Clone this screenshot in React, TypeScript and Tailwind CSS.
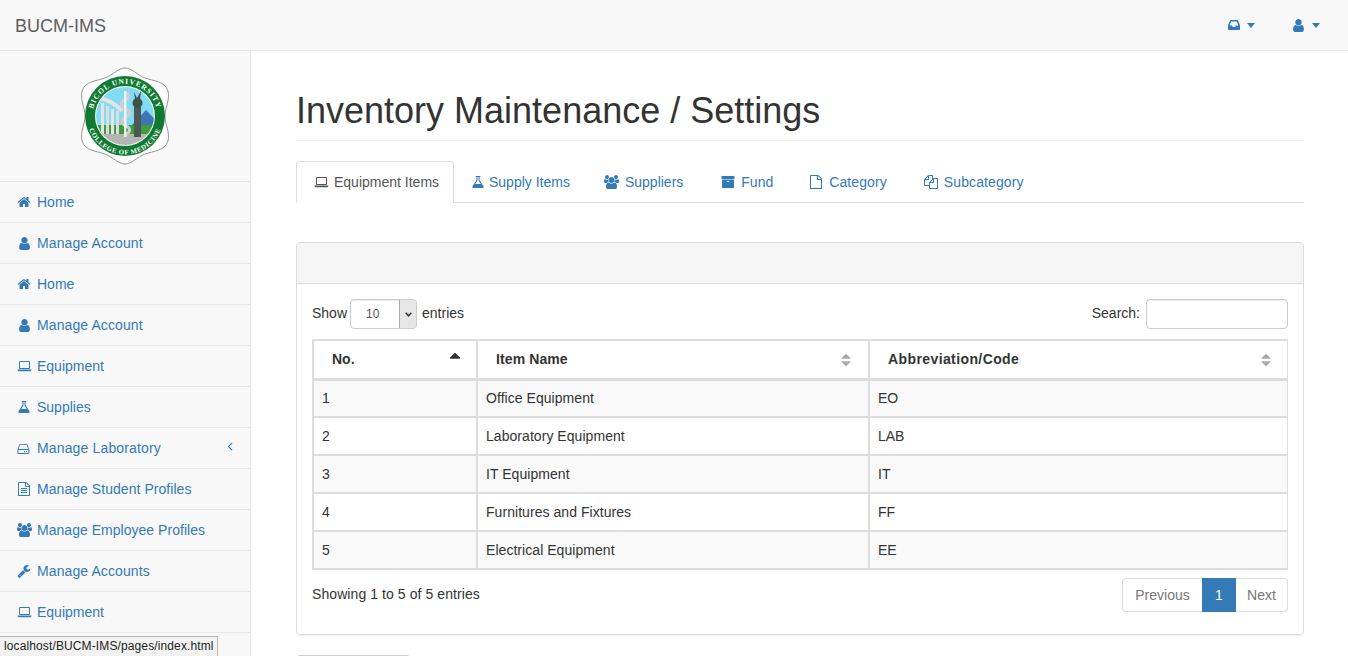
import React from "react";

type IconDef = { d: string; vb?: number };

const I: Record<string, IconDef> = {
  home: { d: "M1472 992v480q0 26-19 45t-45 19h-384v-384h-256v384h-384q-26 0-45-19t-19-45v-480q0-1 .5-3t.5-3l575-474 575 474q1 2 1 6zm223-69l-62 74q-8 9-21 11h-3q-13 0-21-7l-692-577-692 577q-12 8-24 7-13-2-21-11l-62-74q-8-10-7-23.5t11-21.5l719-599q32-26 76-26t76 26l244 204v-195q0-14 9-23t23-9h192q14 0 23 9t9 23v408l219 182q10 8 11 21.5t-7 23.5z" },
  user: { d: "M1536 1399q0 109-62.5 187t-150.5 78h-854q-88 0-150.5-78t-62.5-187q0-85 8.5-160.5t31.5-152 58.5-131 94-89 134.5-34.5q131 128 313 128t313-128q76 0 134.5 34.5t94 89 58.5 131 31.5 152 8.5 160.5zm-256-887q0 159-112.5 271.5t-271.5 112.5-271.5-112.5-112.5-271.5 112.5-271.5 271.5-112.5 271.5 112.5 112.5 271.5z" },
  users: { vb: 1920, d: "M593 896q-162 5-265 128h-134q-82 0-138-40.5t-56-118.5q0-353 124-353 6 0 43.5 21t97.5 42.5 119 21.5q67 0 133-23-5 37-5 66 0 139 81 256zm1071 637q0 120-73 189.5t-194 69.5h-874q-121 0-194-69.5t-73-189.5q0-53 3.5-103.5t14-109 26.5-108.5 43-97.5 62-81 85.5-53.5 111.5-20q10 0 43 21.5t73 48 107 48 135 21.5 135-21.5 107-48 73-48 43-21.5q61 0 111.5 20t85.5 53.5 62 81 43 97.5 26.5 108.5 14 109 3.5 103.5zm-1024-1277q0 106-75 181t-181 75-181-75-75-181 75-181 181-75 181 75 75 181zm704 384q0 159-112.5 271.5t-271.5 112.5-271.5-112.5-112.5-271.5 112.5-271.5 271.5-112.5 271.5 112.5 112.5 271.5zm576 225q0 78-56 118.5t-138 40.5h-134q-103-123-265-128 81-117 81-256 0-29-5-66 66 23 133 23 59 0 119-21.5t97.5-42.5 43.5-21q124 0 124 353zm-128-609q0 106-75 181t-181 75-181-75-75-181 75-181 181-75 181 75 75 181z" },
  laptop: { vb: 1920, d: "M416 1280q-66 0-113-47t-47-113v-704q0-66 47-113t113-47h1088q66 0 113 47t47 113v704q0 66-47 113t-113 47h-1088zm-32-864v704q0 13 9.5 22.5t22.5 9.5h1088q13 0 22.5-9.5t9.5-22.5v-704q0-13-9.5-22.5t-22.5-9.5h-1088q-13 0-22.5 9.5t-9.5 22.5zM80 1344h1760v64q0 66-47 113t-113 47H240q-66 0-113-47t-47-113z" },
  flask: { d: "M1591 1448q56 89 21.5 152.5t-140.5 63.5h-1152q-106 0-140.5-63.5t21.5-152.5l503-793v-399h-64q-26 0-45-19t-19-45 19-45 45-19h512q26 0 45 19t19 45-19 45-45 19h-64v399zm-779-725l-272 429h712l-272-429-20-31v-436h-128v436z" },
  hdd: { d: "M1040 1344q0 33-23.5 56.5t-56.5 23.5-56.5-23.5-23.5-56.5 23.5-56.5 56.5-23.5 56.5 23.5 23.5 56.5zm256 0q0 33-23.5 56.5t-56.5 23.5-56.5-23.5-23.5-56.5 23.5-56.5 56.5-23.5 56.5 23.5 23.5 56.5zm160 160v-320q0-13-9.5-22.5t-22.5-9.5h-1216q-13 0-22.5 9.5t-9.5 22.5v320q0 13 9.5 22.5t22.5 9.5h1216q13 0 22.5-9.5t9.5-22.5zm-1248-480h1202l-170-522q-4-13-15-21t-25-8h-782q-14 0-25 8t-15 21zm1376 160v320q0 66-47 113t-113 47h-1216q-66 0-113-47t-47-113v-320q0-25 16-75l197-606q17-53 63-86t101-33h782q55 0 101 33t63 86l197 606q16 50 16 75z" },
  fileText: { d: "M1596 380q28 28 48 76t20 88v1152q0 40-28 68t-68 28h-1344q-40 0-68-28t-28-68v-1600q0-40 28-68t68-28h896q40 0 88 20t76 48zm-444-244v376h376q-10-29-22-41l-313-313q-12-12-41-22zm384 1528v-1024h-416q-40 0-68-28t-28-68v-416h-768v1536h1280zm-1024-864q0-14 9-23t23-9h704q14 0 23 9t9 23v64q0 14-9 23t-23 9h-704q-14 0-23-9t-9-23v-64zm736 224q14 0 23 9t9 23v64q0 14-9 23t-23 9h-704q-14 0-23-9t-9-23v-64q0-14 9-23t23-9h704zm0 256q14 0 23 9t9 23v64q0 14-9 23t-23 9h-704q-14 0-23-9t-9-23v-64q0-14 9-23t23-9h704z" },
  file: { d: "M1596 380q28 28 48 76t20 88v1152q0 40-28 68t-68 28h-1344q-40 0-68-28t-28-68v-1600q0-40 28-68t68-28h896q40 0 88 20t76 48zm-444-244v376h376q-10-29-22-41l-313-313q-12-12-41-22zm384 1528v-1024h-416q-40 0-68-28t-28-68v-416h-768v1536h1280z" },
  wrench: { d: "M448 1472q0-26-19-45t-45-19-45 19-19 45 19 45 45 19 45-19 19-45zm644-420l-682 682q-37 37-90 37-52 0-91-37l-106-108q-38-36-38-90 0-53 38-91l681-681q39 98 114.5 173.5t173.5 114.5zm634-435q0 39-23 106-47 134-164.5 217.5t-258.5 83.5q-185 0-316.5-131.5t-131.5-316.5 131.5-316.5 316.5-131.5q58 0 121.5 16.5t107.5 46.5q16 11 16 28t-16 28l-293 169v224l193 107q5-3 79-48.5t135.5-81 70.5-35.5q15 0 23.5 10t8.5 25z" },
  archive: { d: "M1088 832q0-26-19-45t-45-19h-256q-26 0-45 19t-19 45 19 45 45 19h256q26 0 45-19t19-45zm576-192v960q0 26-19 45t-45 19h-1408q-26 0-45-19t-19-45v-960q0-26 19-45t45-19h1408q26 0 45 19t19 45zm64-448v256q0 26-19 45t-45 19h-1536q-26 0-45-19t-19-45v-256q0-26 19-45t45-19h1536q26 0 45 19t19 45z" },
  files: { d: "M1696 384q40 0 68 28t28 68v1216q0 40-28 68t-68 28h-960q-40 0-68-28t-28-68v-288h-544q-40 0-68-28t-28-68v-672q0-40 20-88t48-76l408-408q28-28 76-48t88-20h416q40 0 68 28t28 68v328q68-40 128-40h416zm-544 213l-299 299h299v-299zm-640-384l-299 299h299v-299zm196 647l316-316v-416h-384v416q0 40-28 68t-68 28h-416v640h512v-256q0-40 20-88t48-76zm956 804v-1152h-384v416q0 40-28 68t-68 28h-416v640h896z" },
  inbox: { d: "M1151 960h316q-1-3-2.5-8.5t-2.5-7.5l-212-496h-708l-212 496q-1 2-2.5 7.5t-2.5 8.5h316l95 192h320zm513 30v482q0 26-19 45t-45 19h-1408q-26 0-45-19t-19-45v-482q0-62 25-123l238-552q10-25 36.5-42t52.5-17h832q26 0 52.5 17t36.5 42l238 552q25 61 25 123z" },
  angleLeft: { d: "M1203 544q0 13-10 23l-393 393 393 393q10 10 10 23t-10 23l-50 50q-10 10-23 10t-23-10l-466-466q-10-10-10-23t10-23l466-466q10-10 23-10t23 10l50 50q10 10 10 23z" },
  sort: { d: "M1408 1088q0 26-19 45l-448 448q-19 19-45 19t-45-19l-448-448q-19-19-19-45t19-45 45-19h896q26 0 45 19t19 45zm0-384q0 26-19 45t-45 19h-896q-26 0-45-19t-19-45 19-45l448-448q19-19 45-19t45 19l448 448q19 19 19 45z" },
  sortAsc: { d: "M1408 704q0 26-19 45t-45 19h-896q-26 0-45-19t-19-45 19-45l448-448q19-19 45-19t45 19l448 448q19 19 19 45z" },
};

function Fa({ name, size = 14, className }: { name: string; size?: number; className?: string }) {
  const { d, vb = 1792 } = I[name];
  return (
    <svg width={(vb / 1792) * size} height={size} viewBox={`0 0 ${vb} 1792`} fill="currentColor" className={"block shrink-0 " + (className ?? "")}>
      <path d={d} />
    </svg>
  );
}

const side: [string, string, string][] = [
  ["home", "Home", ""],
  ["user", "Manage Account", "tracking-[0.1px]"],
  ["home", "Home", ""],
  ["user", "Manage Account", "tracking-[0.1px]"],
  ["laptop", "Equipment", ""],
  ["flask", "Supplies", ""],
  ["hdd", "Manage Laboratory", "tracking-[0.15px]"],
  ["fileText", "Manage Student Profiles", "tracking-[0.05px]"],
  ["users", "Manage Employee Profiles", "tracking-[0.03px]"],
  ["wrench", "Manage Accounts", "tracking-[0.1px]"],
  ["laptop", "Equipment", ""],
];

const tabs: [string, string, string][] = [
  ["users", "Suppliers", "mr-[6px]"],
  ["archive", "Fund", "mr-[4px]"],
  ["file", "Category", "mr-[5px] tracking-[0.1px]"],
  ["files", "Subcategory", "tracking-[0.1px]"],
];

const rows = [
  ["1", "Office Equipment", "EO"],
  ["2", "Laboratory Equipment", "LAB"],
  ["3", "IT Equipment", "IT"],
  ["4", "Furnitures and Fixtures", "FF"],
  ["5", "Electrical Equipment", "EE"],
];

function Caret() {
  return <span className="block w-0 h-0 border-x-[4.5px] border-t-[5px] border-x-transparent border-t-[#337ab7]" />;
}

function Logo() {
  return (
    <svg width="90" height="98" viewBox="0 0 90 98" className="block">
      <defs>
        <path id="topArc" d="M12.5 52 A32.6 32.6 0 1 1 77.5 52" />
        <path id="botArc" d="M7.4 55 A38 38 0 0 0 82.6 55" />
        <clipPath id="inner"><circle cx="45" cy="49" r="29" /></clipPath>
      </defs>
      <path
        d="M45 1 C52 1 57 8 65 11 C73 14 85 14 88 24 C90 33 85 41 85 49 C85 57 90 65 88 74 C85 84 73 84 65 87 C57 90 52 97 45 97 C38 97 33 90 25 87 C17 84 5 84 2 74 C0 65 5 57 5 49 C5 41 0 33 2 24 C5 14 17 14 25 11 C33 8 38 1 45 1 Z"
        fill="#fff" stroke="#8a8a8a" strokeWidth="0.9"
      />
      <circle cx="45" cy="49" r="40" fill="#0f7a32" />
      <circle cx="45" cy="49" r="30" fill="#fff" />
      <g clipPath="url(#inner)">
        <rect x="15" y="20" width="60" height="38" fill="#84dcf2" />
        <path d="M50 60 L66 43 L82 60 Z" fill="#3f74b8" />
        <rect x="15" y="58" width="60" height="10" fill="#3f9b3c" />
        <rect x="15" y="67" width="60" height="12" fill="#b5b5b5" />
        <path d="M17 31 C27 32 35 36 42 44" stroke="#e4e4e4" strokeWidth="4" fill="none" />
        <rect x="21" y="36" width="3" height="31" fill="#e4e4e4" />
        <rect x="26" y="39" width="3" height="28" fill="#dcdcdc" />
        <rect x="31" y="42" width="3" height="25" fill="#e4e4e4" />
        <rect x="36" y="44" width="3" height="23" fill="#dcdcdc" />
        <rect x="54" y="40" width="7" height="30" fill="#4b5a50" />
        <circle cx="57.5" cy="36" r="5" fill="#3f5148" />
        <path d="M54 25 L57 31 L61 24 L60 32 L55 32 Z" fill="#3f5148" />
        <path d="M45 26 C50 26 50 31 45 33 C40 35 40 40 46 42 C51 44 51 48 46 50 C41 52 41 57 46 59 C51 61 51 65 45 68" stroke="#cfcfcf" strokeWidth="3" fill="none" />
        <rect x="44" y="24" width="2.4" height="46" fill="#f2f2f2" />
      </g>
      <text fill="#fff" fontSize="7.5" fontWeight="700" fontFamily="'Liberation Serif', serif" letterSpacing="0.9">
        <textPath href="#topArc" startOffset="50%" textAnchor="middle">BICOL UNIVERSITY</textPath>
      </text>
      <text fill="#fff" fontSize="6.8" fontWeight="700" fontFamily="'Liberation Serif', serif" letterSpacing="0.6">
        <textPath href="#botArc" startOffset="50%" textAnchor="middle">COLLEGE OF MEDICINE</textPath>
      </text>
    </svg>
  );
}

export default function App() {
  return (
    <div className="h-[656px] w-[1348px] overflow-hidden relative bg-white text-[14px] leading-[20px] text-[#333] font-['Liberation_Sans',Arial,sans-serif]">
      <header className="h-[51px] bg-[#f8f8f8] border-b border-[#e7e7e7] flex items-center justify-between">
        <span className="pl-[15px] text-[18px] text-[#5e5e5e] leading-[20px] mt-px">BUCM-IMS</span>
        <div className="flex items-center gap-[36px] pr-[28px] text-[#337ab7]">
          <span className="flex items-center gap-[6px]">
            <Fa name="inbox" />
            <Caret />
          </span>
          <span className="flex items-center gap-[6px]">
            <Fa name="user" size={15} />
            <Caret />
          </span>
        </div>
      </header>
      <div className="flex h-[605px]">
        <aside className="w-[251px] shrink-0 bg-[#f8f8f8] border-r border-[#e7e7e7]">
          <div className="h-[131px] border-b border-[#e7e7e7] flex justify-center pt-[16px]">
            <Logo />
          </div>
          {side.map(([icon, label, cls], i) => (
            <div key={i} className="h-[41px] border-b border-[#e7e7e7] flex items-center pl-[15px] pr-[13px] text-[#337ab7]">
              <span className="w-[18px] mr-[4px] flex justify-center shrink-0">
                <Fa name={icon} size={icon === "user" ? 15 : 14} />
              </span>
              <span className={"grow " + cls}>{label}</span>
              {label === "Manage Laboratory" && <Fa name="angleLeft" size={14} className="-mt-[5px]" />}
            </div>
          ))}
        </aside>
        <main className="grow min-w-0 pl-[45px] pr-[44px]">
          <h1 className="mt-[40px] h-[50px] border-b border-[#eee] text-[36px] leading-[40px] font-normal text-[#333]">
            Inventory Maintenance / Settings
          </h1>
          <nav className="mt-[20px] h-[42px] border-b border-[#ddd] flex text-[#337ab7]">
            <div className="w-[158px] h-[42px] mr-[2px] pl-[15px] flex items-center bg-white border border-[#ddd] border-b-white rounded-t-[4px] text-[#555] whitespace-nowrap">
              <span className="w-[18px] mr-[4px] flex justify-center"><Fa name="laptop" /></span>
              Equipment Items
            </div>
            <div className="h-[41px] pl-[15px] pr-[15px] mr-[3px] flex items-center">
              <Fa name="flask" className="mr-[4px]" />
              Supply Items
            </div>
            {tabs.map(([icon, label, cls], i) => (
              <div key={i} className={"h-[41px] px-[15px] flex items-center " + cls}>
                <span className="w-[18px] mr-[4px] flex justify-center"><Fa name={icon} /></span>
                {label}
              </div>
            ))}
          </nav>
          <section className="mt-[39px] h-[393px] border border-[#ddd] rounded-[4px] shadow-[0_1px_1px_rgba(0,0,0,0.05)]">
            <div className="h-[41px] bg-[#f5f5f5] border-b border-[#ddd] rounded-t-[3px]" />
            <div className="px-[15px] pt-[15px]">
              <div className="flex justify-between items-center h-[30px]">
                <div className="flex items-center">
                  <span className="pb-[2px]">Show</span>
                  <span className="ml-[3px] mr-[5px] w-[67px] h-[30px] border border-[#ccc] rounded-[4px] flex items-center overflow-hidden shadow-[inset_0_1px_1px_rgba(0,0,0,0.075)]">
                    <span className="grow pl-[15px] text-[12px] text-[#555]">10</span>
                    <span className="w-[17px] h-full bg-[#e6e6e6] border-l border-[#a9a9a9] flex items-center justify-center">
                      <svg width="7" height="5" viewBox="0 0 7 5"><path d="M0.7 0.8 L3.5 3.8 L6.3 0.8" fill="none" stroke="#333" strokeWidth="1.5" /></svg>
                    </span>
                  </span>
                  <span className="pb-[2px]">entries</span>
                </div>
                <div className="flex items-center">
                  <span className="pb-[2px]">Search:</span>
                  <span className="ml-[6px] w-[142px] h-[30px] border border-[#ccc] rounded-[4px] bg-white shadow-[inset_0_1px_1px_rgba(0,0,0,0.075)]" />
                </div>
              </div>
              <table className="mt-[10px] w-[974px] table-fixed border-collapse border-2 border-r border-[#ddd]">
                <colgroup>
                  <col className="w-[164px]" />
                  <col className="w-[392px]" />
                  <col className="w-[418px]" />
                </colgroup>
                <thead>
                  <tr className="h-[39px] border-b-[3px] border-[#ddd]">
                    <th className="border-r-2 border-[#ddd] pl-[18px] text-left relative font-bold">
                      No.
                      <Fa name="sortAsc" size={18} className="absolute right-[12px] top-[10px] text-[#333]" />
                    </th>
                    <th className="border-r-2 border-[#ddd] pl-[18px] text-left relative font-bold tracking-[0.1px]">
                      Item Name
                      <Fa name="sort" size={16} className="absolute right-[14px] top-[11px] text-[#aaa]" />
                    </th>
                    <th className="pl-[18px] text-left relative font-bold tracking-[0.4px]">
                      Abbreviation/Code
                      <Fa name="sort" size={16} className="absolute right-[13px] top-[11px] text-[#aaa]" />
                    </th>
                  </tr>
                </thead>
                <tbody>
                  {rows.map((r, i) => (
                    <tr key={r[0]} className={"h-[38px] border-b-2 border-[#ddd] " + (i % 2 === 0 ? "bg-[#f9f9f9]" : "bg-white")}>
                      <td className="border-r-2 border-[#ddd] pl-[8px]">{r[0]}</td>
                      <td className="border-r-2 border-[#ddd] pl-[8px] tracking-[0.05px]">{r[1]}</td>
                      <td className="pl-[8px]">{r[2]}</td>
                    </tr>
                  ))}
                </tbody>
              </table>
              <div className="flex justify-between mt-[8px]">
                <span className="pt-[6px] tracking-[0.08px]">Showing 1 to 5 of 5 entries</span>
                <div className="flex h-[34px]">
                  <span className="w-[80px] flex items-center justify-center border border-r-0 border-[#ddd] rounded-l-[4px] text-[#777] bg-white">Previous</span>
                  <span className="w-[34px] flex items-center justify-center bg-[#337ab7] border border-[#337ab7] text-white">1</span>
                  <span className="w-[52px] flex items-center justify-center border border-l-0 border-[#ddd] rounded-r-[4px] text-[#777] bg-white">Next</span>
                </div>
              </div>
            </div>
          </section>
          <div className="mt-[20px] w-[115px] h-[34px] border border-[#ccc] rounded-[4px] bg-white" />
        </main>
      </div>
      <div className="absolute left-0 bottom-0 h-[20px] w-[218px] pl-[4px] bg-[#f2f2f2] border border-[#b5b5b5] border-l-0 border-b-0 text-[12px] leading-[19px] text-[#222] whitespace-nowrap tracking-[0.12px]">
        localhost/BUCM-IMS/pages/index.html
      </div>
    </div>
  );
}
